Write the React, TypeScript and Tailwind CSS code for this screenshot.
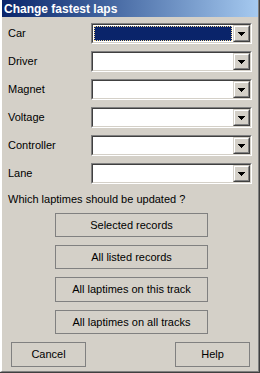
import React from 'react';

const font = { fontFamily: '"Liberation Sans", Arial, sans-serif' };

const ArrowButton: React.FC = () => (
    <div className="w-[17px] h-[17px] bg-[#d4d0c8] border-t border-l border-t-[#d4d0c8] border-l-[#d4d0c8] border-r border-b border-r-[#404040] border-b-[#404040]">
        <div className="w-full h-full flex items-center justify-center border-t border-l border-t-white border-l-white border-r border-b border-r-[#808080] border-b-[#808080]">
            <svg width="7" height="4" viewBox="0 0 7 4" className="mt-[1px]">
                <path d="M0 0h7v1h-1v1h-1v1h-1v1h-1v-1h-1v-1h-1v-1h-1z" fill="#000" />
            </svg>
        </div>
    </div>
);

const Combo: React.FC<{ focused?: boolean }> = ({ focused }) => (
    <div className="w-[161px] h-[21px] border-t border-l border-t-[#808080] border-l-[#808080] border-r border-b border-r-white border-b-white">
        <div className="w-full h-full flex bg-white border-t border-l border-t-[#404040] border-l-[#404040] border-r border-b border-r-[#d4d0c8] border-b-[#d4d0c8]">
            <div className="flex-1 p-[1px]">
                {focused && (
                    <div className="w-full h-full bg-[#0a246a] border border-dotted border-[#f5db95]" />
                )}
            </div>
            <ArrowButton />
        </div>
    </div>
);

const Button: React.FC<{ label: string; className?: string }> = ({ label, className }) => (
    <div
        className={`h-[24px] flex items-center justify-center text-[11px] text-black border border-[#808080] ${className ?? ''}`}
    >
        {label}
    </div>
);

const fields = ['Car', 'Driver', 'Magnet', 'Voltage', 'Controller', 'Lane'];

export default function App() {
    return (
        <div style={font} className="w-[260px] h-[373px] bg-[#d4d0c8] border-r border-b border-[#404040] select-none">
            <div className="w-full h-full flex flex-col border-l-2 border-l-white border-r border-b border-r-[#808080] border-b-[#808080]">
                {/* Title bar */}
                <div className="h-[17px] flex items-center pl-[2px] bg-gradient-to-r from-[#0a246a] to-[#a6caf0]">
                    <span className="text-[12px] font-bold text-white leading-none">Change fastest laps</span>
                </div>

                {/* Fields */}
                <div className="flex flex-col gap-[7px] mt-[6px] pl-[6px]">
                    {fields.map((f, i) => (
                        <div key={f} className="flex items-center h-[21px]">
                            <span className="w-[83px] text-[11px] text-black">{f}</span>
                            <Combo focused={i === 0} />
                        </div>
                    ))}
                </div>

                <div className="mt-[9px] pl-[6px] text-[11px] leading-[13px] text-black">
                    Which laptimes should be updated ?
                </div>

                {/* Update options */}
                <div className="flex flex-col gap-[8px] mt-[7px] ml-[53px] w-[153px]">
                    <Button label="Selected records" />
                    <Button label="All listed records" />
                    <Button label="All laptimes on this track" className="h-[25px]" />
                    <Button label="All laptimes on all tracks" />
                </div>

                {/* Footer */}
                <div className="flex justify-between mt-[8px] ml-[9px] mr-[8px]">
                    <Button label="Cancel" className="w-[75px] h-[25px]" />
                    <Button label="Help" className="w-[75px] h-[25px]" />
                </div>
            </div>
        </div>
    );
}
